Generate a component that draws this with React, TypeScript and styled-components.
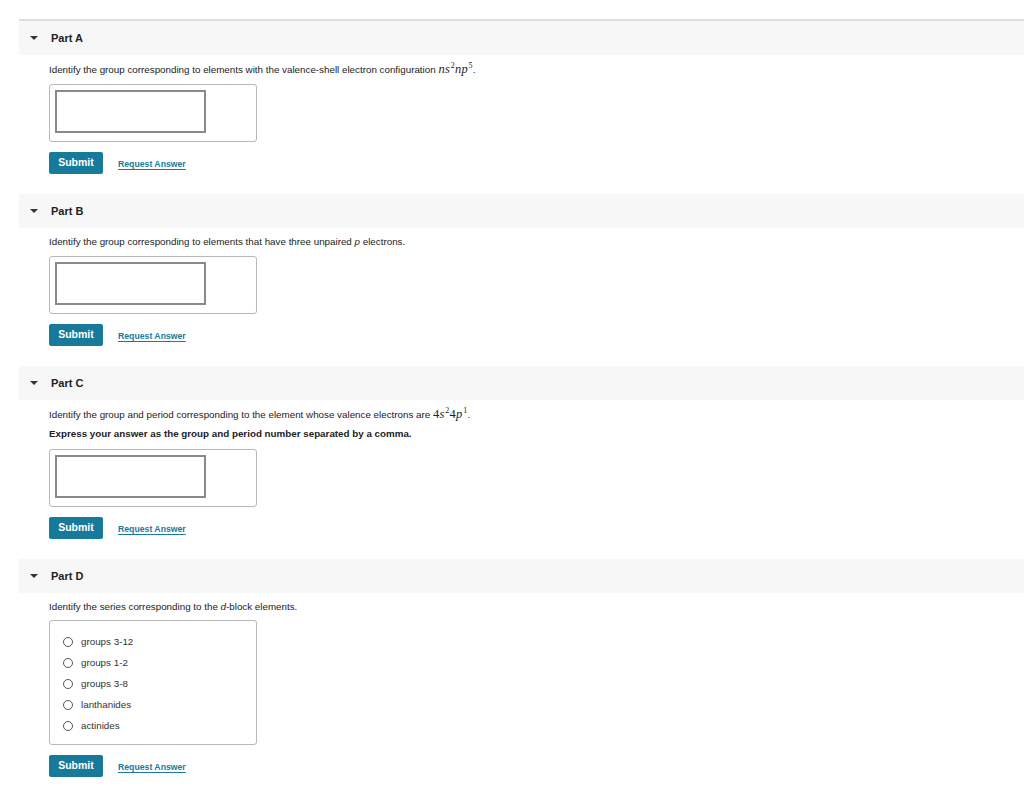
import React from "react";
import styled, { createGlobalStyle } from "styled-components";

const GlobalStyle = createGlobalStyle`
  body {
    margin: 0;
    background: #fff;
    font-family: "Liberation Sans", Arial, sans-serif;
    color: #222;
  }
`;

const Page = styled.div`
  padding: 19px 0 20px 19px;
`;

const Section = styled.section<{ $first?: boolean }>`
  border-top: ${(p) => (p.$first ? "2px solid #dedede" : "none")};
  margin-top: ${(p) => (p.$first ? "0" : "20px")};
`;

const PartHeader = styled.div`
  height: 34px;
  background: #f7f7f7;
  display: flex;
  align-items: center;
  padding-left: 11px;
  gap: 13px;
  font-size: 11px;
  font-weight: bold;
  color: #222;
`;

const Caret = styled.span`
  width: 0;
  height: 0;
  border-left: 4px solid transparent;
  border-right: 4px solid transparent;
  border-top: 4.5px solid #333;
`;

const Content = styled.div`
  padding: 7px 0 0 30px;
`;

const Prompt = styled.p<{ $bold?: boolean; $gap?: number }>`
  margin: 0 0 ${(p) => (p.$gap ?? 7)}px;
  font-size: 9.8px;
  line-height: 14px;
  font-weight: ${(p) => (p.$bold ? "bold" : "normal")};
  color: #222;
`;

const Math = styled.span`
  font-family: "Liberation Serif", "Times New Roman", serif;
  font-style: italic;
  font-size: 12.5px;
  letter-spacing: 0.3px;

  sup {
    font-size: 8px;
    font-style: normal;
    position: relative;
    top: -5px;
    vertical-align: baseline;
    line-height: 0;
    margin-left: 0.5px;
  }
`;

const Upright = styled.span`
  font-style: normal;
`;

const AnswerBox = styled.div<{ $list?: boolean }>`
  width: 208px;
  box-sizing: border-box;
  border: 1.5px solid #b8b8b8;
  border-radius: 3px;
  padding: ${(p) => (p.$list ? "10px 0 9px 12px" : "5px 0 0 5px")};
  height: ${(p) => (p.$list ? "125px" : "58px")};
`;

const InputField = styled.div`
  width: 151px;
  height: 43px;
  box-sizing: border-box;
  border: 2px solid #8a8a8a;
  background: #fff;
`;

const Option = styled.label`
  display: flex;
  align-items: center;
  height: 21px;
  font-size: 9.8px;
  color: #333;
  gap: 8px;
`;

const Radio = styled.span`
  width: 8px;
  height: 8px;
  border: 1.3px solid #555;
  border-radius: 50%;
  box-sizing: content-box;
  margin-left: 1px;
`;

const Actions = styled.div`
  display: flex;
  align-items: center;
  gap: 15px;
  margin-top: 10px;
`;

const SubmitButton = styled.button`
  width: 54px;
  height: 22px;
  border: none;
  border-radius: 2px;
  background: #177a9b;
  color: #fff;
  font-family: "Liberation Sans", Arial, sans-serif;
  font-weight: bold;
  font-size: 10.5px;
  padding: 0 0 2px;
`;

const RequestLink = styled.a`
  color: #177a9b;
  font-size: 8.7px;
  font-weight: bold;
  text-decoration: underline;
  text-underline-offset: 2px;
  margin-top: 2px;
`;

function Part({
  label,
  first,
  children,
}: {
  label: string;
  first?: boolean;
  children: React.ReactNode;
}) {
  return (
    <Section $first={first}>
      <PartHeader>
        <Caret />
        <span>{label}</span>
      </PartHeader>
      <Content>
        {children}
        <Actions>
          <SubmitButton>Submit</SubmitButton>
          <RequestLink href="#">Request Answer</RequestLink>
        </Actions>
      </Content>
    </Section>
  );
}

const options = ["groups 3-12", "groups 1-2", "groups 3-8", "lanthanides", "actinides"];

export default function App() {
  return (
    <>
      <GlobalStyle />
      <Page>
        <Part label="Part A" first>
          <Prompt>
            Identify the group corresponding to elements with the valence-shell electron
            configuration{" "}
            <Math>
              ns<sup>2</sup>np<sup>5</sup>
            </Math>
            .
          </Prompt>
          <AnswerBox>
            <InputField />
          </AnswerBox>
        </Part>

        <Part label="Part B">
          <Prompt>
            Identify the group corresponding to elements that have three unpaired <i>p</i>{" "}
            electrons.
          </Prompt>
          <AnswerBox>
            <InputField />
          </AnswerBox>
        </Part>

        <Part label="Part C">
          <Prompt $gap={5}>
            Identify the group and period corresponding to the element whose valence
            electrons are{" "}
            <Math>
              <Upright>4</Upright>s<sup>2</sup>
              <Upright>4</Upright>p<sup>1</sup>
            </Math>
            .
          </Prompt>
          <Prompt $bold $gap={8}>
            Express your answer as the group and period number separated by a comma.
          </Prompt>
          <AnswerBox>
            <InputField />
          </AnswerBox>
        </Part>

        <Part label="Part D">
          <Prompt $gap={6}>
            Identify the series corresponding to the <i>d</i>-block elements.
          </Prompt>
          <AnswerBox $list>
            {options.map((o) => (
              <Option key={o}>
                <Radio />
                {o}
              </Option>
            ))}
          </AnswerBox>
        </Part>
      </Page>
    </>
  );
}
